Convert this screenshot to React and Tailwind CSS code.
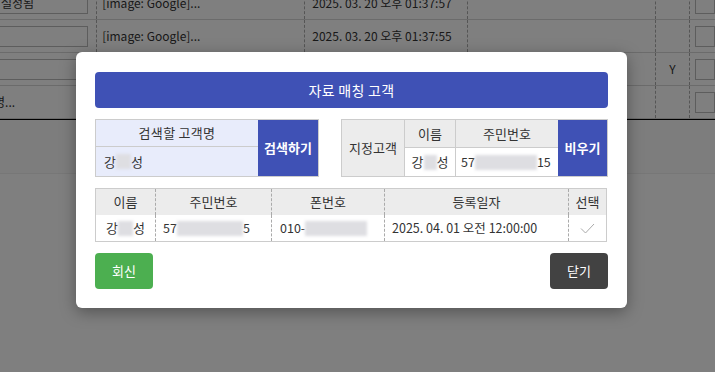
import React from 'react';

const font = { fontFamily: '"Noto Sans CJK KR", "Noto Sans", sans-serif' };

const Blur = ({ w }) => (
  <span className={`inline-block h-[15px] align-middle bg-[#dedee2] blur-[1.5px] ${w}`}></span>
);

const bgRows = [
  { box: '설성됨', text: '[image: Google]...', date: '2025. 03. 20 오후 01:37:57', y: '' },
  { box: '', text: '[image: Google]...', date: '2025. 03. 20 오후 01:37:55', y: '' },
  { box: '', text: '', date: '', y: 'Y' },
  { box: '', text: '', date: '', y: '', tail: '명...' },
];

export default function App() {
  return (
    <div className="relative w-[715px] h-[372px] overflow-hidden bg-white text-[#333]" style={font}>
      {/* page behind the dialog */}
      <div className="-mt-[13px]">
        {bgRows.map((r, i) => (
          <div key={i} className="flex h-[33px] border-b border-[#d6d6d6] text-[12px]">
            <div className="w-[98px] flex items-center">
              {r.tail ? (
                <span className="-ml-[6px]">{r.tail}</span>
              ) : (
                <div className="w-[89px] -ml-[1px] h-[21px] border border-[#bbb] flex items-center pl-[1px]">{r.box}</div>
              )}
            </div>
            <div className="w-[212px] border-l border-dashed border-[#aaa] flex items-center pl-[5px]">{r.text}</div>
            <div className="w-[166px] border-l border-dashed border-[#aaa] flex items-center pl-[7px]">{r.date}</div>
            <div className="w-[191px] border-l border-dashed border-[#aaa]"></div>
            <div className="w-[35px] border-l border-dashed border-[#aaa] flex items-center justify-center">{r.y}</div>
            <div className="w-[6px] border-l border-dashed border-[#aaa]"></div>
            <div className="flex-1 flex items-center">
              <div className="w-[20px] h-[21px] border border-[#bbb]"></div>
            </div>
          </div>
        ))}
        <div className="h-[1px] bg-black"></div>
        <div className="h-[54px] bg-[#fbfbfb] border-b border-[#eee]"></div>
      </div>

      {/* overlay + dialog */}
      <div className="absolute inset-0 bg-black/50 flex items-start pt-[52px] pl-[76px]">
        <div className="w-[551px] bg-white rounded-[6px] shadow-[0_4px_16px_rgba(0,0,0,0.35)] px-[19px] pt-[20px] pb-[19px] text-[13px] text-[#333]">
          <div className="h-[36px] rounded-[4px] bg-[#3f51b5] text-white text-[14px] tracking-[0.3px] flex items-center justify-center">
            자료 매칭 고객
          </div>

          <div className="flex justify-between mt-[11px]">
            {/* search */}
            <div className="flex w-[224px] h-[58px] border border-[#ccc]">
              <div className="w-[162px] bg-[#e8ecfb] flex flex-col">
                <div className="h-[27px] flex items-center justify-center border-b border-[#ccc] tracking-[0.3px]">검색할 고객명</div>
                <div className="flex-1 flex items-center pl-[8px]">
                  강<Blur w="w-[15px]" />성
                </div>
              </div>
              <div className="flex-1 bg-[#3f51b5] text-white font-bold text-[13px] flex items-center justify-center">
                검색하기
              </div>
            </div>

            {/* designated */}
            <div className="flex w-[267px] h-[58px] border border-[#ccc]">
              <div className="w-[63px] bg-[#ececec] flex items-center justify-center border-r border-[#ccc]">지정고객</div>
              <div className="w-[51px] flex flex-col border-r border-[#ccc]">
                <div className="h-[28px] bg-[#ececec] flex items-center justify-center border-b border-[#ccc]">이름</div>
                <div className="flex-1 flex items-center justify-center">강<Blur w="w-[13px]" />성</div>
              </div>
              <div className="w-[102px] flex flex-col">
                <div className="h-[28px] bg-[#ececec] flex items-center justify-center border-b border-[#ccc]">주민번호</div>
                <div className="flex-1 flex items-center pl-[5px] text-[12.5px]">57<Blur w="w-[62px]" />15</div>
              </div>
              <div className="flex-1 bg-[#3f51b5] text-white font-bold flex items-center justify-center">
                비우기
              </div>
            </div>
          </div>

          {/* result table */}
          <div className="mt-[11px] border border-[#ccc] w-[512px]">
            <div className="flex h-[26px] bg-[#ececec]">
              <div className="w-[59px] flex items-center justify-center">이름</div>
              <div className="w-[116px] border-l border-dashed border-[#aaa] flex items-center justify-center">주민번호</div>
              <div className="w-[113px] border-l border-dashed border-[#aaa] flex items-center justify-center">폰번호</div>
              <div className="w-[184px] border-l border-dashed border-[#aaa] flex items-center justify-center">등록일자</div>
              <div className="flex-1 border-l border-dashed border-[#aaa] flex items-center justify-center">선택</div>
            </div>
            <div className="flex h-[26px] text-[12.5px]">
              <div className="w-[59px] flex items-center justify-center text-[13px]">강<Blur w="w-[15px]" />성</div>
              <div className="w-[116px] border-l border-dashed border-[#aaa] flex items-center pl-[7px]">57<Blur w="w-[66px]" />5</div>
              <div className="w-[113px] border-l border-dashed border-[#aaa] flex items-center pl-[8px]">010-<Blur w="w-[62px]" /></div>
              <div className="w-[184px] border-l border-dashed border-[#aaa] flex items-center pl-[7px]">2025. 04. 01 오전 12:00:00</div>
              <div className="flex-1 border-l border-dashed border-[#aaa] flex items-center justify-center">
                <svg width="15" height="11" viewBox="0 0 15 11" fill="none">
                  <path d="M1 5.5l4.5 4.5 8.5-9" stroke="#aaa" strokeWidth="1" />
                </svg>
              </div>
            </div>
          </div>

          <div className="flex justify-between mt-[11px]">
            <button className="w-[58px] h-[36px] rounded-[4px] bg-[#4caf50] text-white text-[13px]">회신</button>
            <button className="w-[58px] h-[36px] rounded-[4px] bg-[#424242] text-white text-[13px]">닫기</button>
          </div>
        </div>
      </div>
    </div>
  );
}
